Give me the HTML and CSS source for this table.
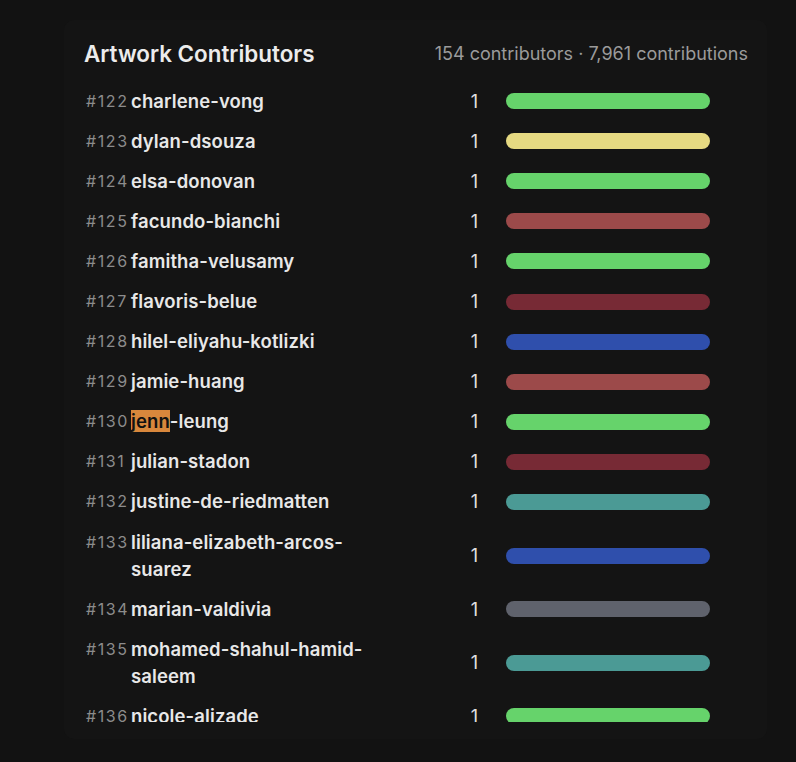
FILE: index.html
```html
<!DOCTYPE html>
<html>
<head>
<meta charset="utf-8">
<link rel="stylesheet" href="styles.css">
</head>
<body>
<section class="card">
  <header class="head">
    <h2 class="title">Artwork Contributors</h2>
    <span class="meta">154 contributors · 7,961 contributions</span>
  </header>
  <div class="list">
    <div class="row"><span class="rank">#122</span><span class="name">charlene-vong</span><span class="count">1</span><span class="bar green"></span></div>
    <div class="row"><span class="rank">#123</span><span class="name">dylan-dsouza</span><span class="count">1</span><span class="bar yellow"></span></div>
    <div class="row"><span class="rank">#124</span><span class="name">elsa-donovan</span><span class="count">1</span><span class="bar green"></span></div>
    <div class="row"><span class="rank">#125</span><span class="name">facundo-bianchi</span><span class="count">1</span><span class="bar red"></span></div>
    <div class="row"><span class="rank">#126</span><span class="name">famitha-velusamy</span><span class="count">1</span><span class="bar green"></span></div>
    <div class="row"><span class="rank">#127</span><span class="name">flavoris-belue</span><span class="count">1</span><span class="bar maroon"></span></div>
    <div class="row"><span class="rank">#128</span><span class="name">hilel-eliyahu-kotlizki</span><span class="count">1</span><span class="bar blue"></span></div>
    <div class="row"><span class="rank">#129</span><span class="name">jamie-huang</span><span class="count">1</span><span class="bar red"></span></div>
    <div class="row"><span class="rank">#130</span><span class="name"><mark class="hl">jenn</mark>-leung</span><span class="count">1</span><span class="bar green"></span></div>
    <div class="row"><span class="rank">#131</span><span class="name">julian-stadon</span><span class="count">1</span><span class="bar maroon"></span></div>
    <div class="row"><span class="rank">#132</span><span class="name">justine-de-riedmatten</span><span class="count">1</span><span class="bar teal"></span></div>
    <div class="row"><span class="rank">#133</span><span class="name">liliana-elizabeth-arcos-suarez</span><span class="count">1</span><span class="bar blue"></span></div>
    <div class="row"><span class="rank">#134</span><span class="name">marian-valdivia</span><span class="count">1</span><span class="bar gray"></span></div>
    <div class="row"><span class="rank">#135</span><span class="name">mohamed-shahul-hamid-saleem</span><span class="count">1</span><span class="bar teal"></span></div>
    <div class="row"><span class="rank">#136</span><span class="name">nicole-alizade</span><span class="count">1</span><span class="bar green"></span></div>
  </div>
</section>
</body>
</html>
```

FILE: styles.css
```css
html, body {
  margin: 0;
  background: #121212;
}
body {
  padding: 20px 29px 0 64px;
  font-family: Inter, "Noto Sans", sans-serif;
  color: #e6e6e6;
}
.card {
  background: #141414;
  border-radius: 10px;
  padding: 20px 19px 17px 20px;
}
.head {
  display: flex;
  justify-content: space-between;
  align-items: center;
  height: 26px;
  margin-bottom: 15px;
}
.title {
  margin: 0;
  font-size: 22.4px;
  font-weight: 600;
  color: #ececec;
}
.meta {
  font-size: 18px;
  color: #9b9b9b;
}
.list {
  height: 641px;
  overflow: hidden;
}
.row {
  display: grid;
  grid-template-columns: 47px 250px 97px 232px;
  align-items: center;
  padding: 6.55px 0;
}
.rank {
  align-self: start;
  padding-left: 2px;
  font-size: 16px;
  line-height: 27px;
  color: #8c8c8c;
  letter-spacing: 1.6px;
}
.name {
  font-size: 18.5px;
  font-weight: 600;
  letter-spacing: 0.1px;
  line-height: 27px;
  color: #e8e8e8;
}
.hl {
  background: #d8873c;
  color: #111;
}
.count {
  justify-self: end;
  font-size: 18px;
  color: #e0e0e0;
}
.bar {
  display: block;
  margin-left: 28px;
  height: 16px;
  border-radius: 8px;
}
.green { background: #66d36b; }
.yellow { background: #e6da82; }
.red { background: #9c4a4a; }
.maroon { background: #772a35; }
.blue { background: #2f4fac; }
.teal { background: #4b9a95; }
.gray { background: #5f626c; }
```
